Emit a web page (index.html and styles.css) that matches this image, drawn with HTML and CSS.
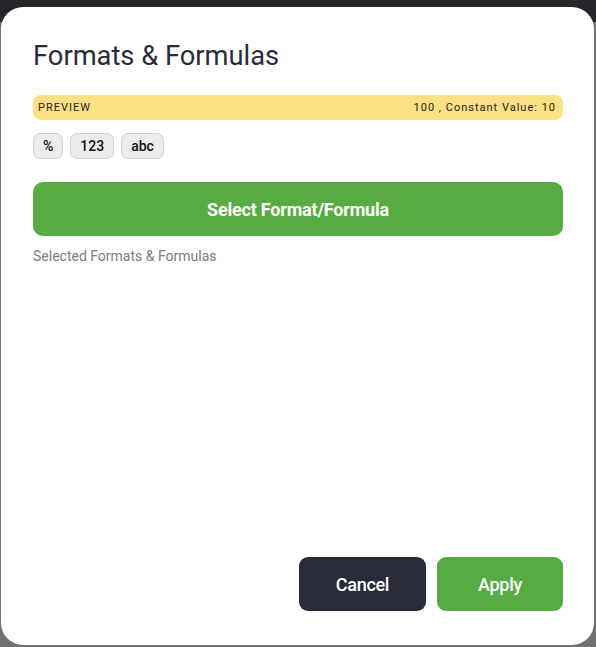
FILE: index.html
```html
<!DOCTYPE html>
<html>
<head>
<meta charset="utf-8">
<link rel="stylesheet" href="styles.css">
</head>
<body>
<div class="page">
  <div class="topbar"></div>
</div>
<div class="modal">
  <h1 class="title">Formats &amp; Formulas</h1>
  <div class="preview">
    <span class="preview-label">PREVIEW</span>
    <span class="preview-value">100 , Constant Value: 10</span>
  </div>
  <div class="chips">
    <button class="chip">%</button>
    <button class="chip">123</button>
    <button class="chip">abc</button>
  </div>
  <button class="select-btn">Select Format/Formula</button>
  <div class="selected-label">Selected Formats &amp; Formulas</div>
  <div class="spacer"></div>
  <div class="actions">
    <button class="btn btn-cancel">Cancel</button>
    <button class="btn btn-apply">Apply</button>
  </div>
</div>
</body>
</html>
```
FILE: styles.css
```css
html, body {
  margin: 0;
  padding: 0;
  height: 100%;
}
body {
  background: #717171;
  font-family: Roboto, "Liberation Sans", sans-serif;
  overflow: hidden;
}
.page {
  height: 100%;
}
.topbar {
  height: 22px;
  background: #25252c;
}
.modal {
  position: absolute;
  left: 1px;
  top: 7px;
  width: 593px;
  height: 638px;
  box-sizing: border-box;
  background: #ffffff;
  border-radius: 22px;
  padding: 32px 31px 34px 32px;
  display: flex;
  flex-direction: column;
}
.title {
  margin: 0;
  font-size: 27.3px;
  font-weight: 400;
  color: #2a2c39;
  line-height: 34px;
}
.preview {
  margin-top: 22px;
  height: 25px;
  background: #fbe084;
  border-radius: 8px;
  display: flex;
  align-items: center;
  justify-content: space-between;
  padding: 0 7px 0 5px;
  font-size: 11px;
  letter-spacing: 1px;
  color: #1e1e1e;
}
.chips {
  margin-top: 13px;
  display: flex;
  gap: 7px;
}
.chip {
  height: 26px;
  box-sizing: border-box;
  background: #ececec;
  border: 1px solid #d2d2d2;
  border-radius: 7px;
  font-family: Roboto, "Liberation Sans", sans-serif;
  font-size: 14px;
  font-weight: 500;
  color: #111;
  padding: 0 9px;
}
.select-btn {
  margin-top: 23px;
  height: 54px;
  border: none;
  border-radius: 10px;
  background: #56ab42;
  color: #fff;
  font-family: Roboto, "Liberation Sans", sans-serif;
  font-size: 18px;
  font-weight: 700;
  letter-spacing: -0.2px;
}
.selected-label {
  margin-top: 12px;
  font-size: 14px;
  color: #7b7b86;
}
.spacer {
  flex: 1;
}
.actions {
  display: flex;
  justify-content: flex-end;
  gap: 11px;
}
.btn {
  height: 54px;
  border: none;
  border-radius: 9px;
  color: #fff;
  font-family: Roboto, "Liberation Sans", sans-serif;
  font-size: 18px;
  font-weight: 500;
  letter-spacing: -0.3px;
}
.btn-cancel {
  width: 127px;
  background: #292b38;
}
.btn-apply {
  width: 126px;
  background: #56ab42;
}
```
